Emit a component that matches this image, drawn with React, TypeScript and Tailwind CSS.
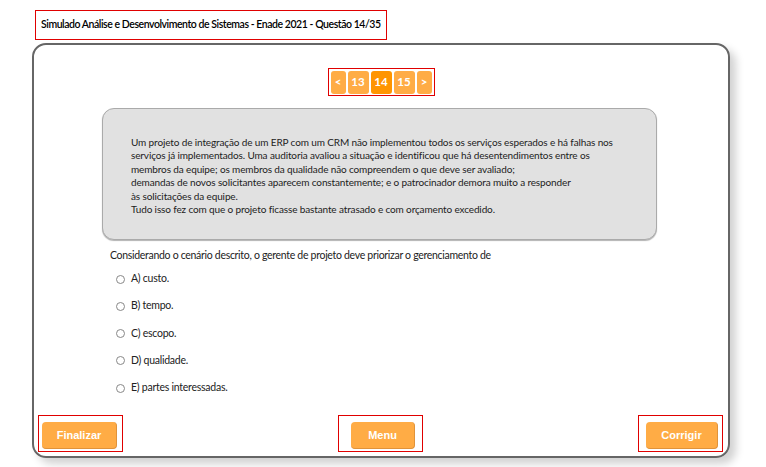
import React from "react";

const options = [
	"A) custo.",
	"B) tempo.",
	"C) escopo.",
	"D) qualidade.",
	"E) partes interessadas.",
];

function PageButton({ label, active }: { label: string; active?: boolean }) {
	return (
		<button
			className={`h-[23px] rounded-[3px] text-white text-[11.5px] font-bold flex items-center justify-center ${
				active ? "bg-[#ff9500]" : "bg-[#ffac45]"
			} ${label.length > 1 ? "w-[21px]" : "w-[15px]"}`}>
			{label}
		</button>
	);
}

function ActionButton({ label, width }: { label: string; width: string }) {
	return (
		<button
			className={`${width} h-[27px] rounded-[4px] bg-[#ffac45] border-b border-r border-[#e0933a] text-white text-[11px] font-bold font-['Liberation_Sans',sans-serif]`}>
			{label}
		</button>
	);
}

export default function App() {
	return (
		<div className="w-[766px] h-[467px] bg-white overflow-hidden text-[#222] font-['Lato',sans-serif]">
			<div className="pt-[10px] pl-[35px]">
				<div className="w-[352px] h-[30px] border border-[#e00000] flex items-center pl-[5px] text-[10.5px] tracking-[-0.45px] font-semibold text-black whitespace-nowrap">
					Simulado Análise e Desenvolvimento de Sistemas - Enade 2021 - Questão 14/35
				</div>
			</div>

			<div className="ml-[32px] mt-[3px] w-[698px] h-[415px] border-2 border-[#666] rounded-[14px] shadow-[6px_6px_8px_rgba(0,0,0,0.18)] flex flex-col">
				{/* pagination */}
				<div className="self-center mt-[23px] w-[107px] h-[28px] border border-[#e00000] flex items-center gap-[2px] px-[2px]">
					<PageButton label="<" />
					<PageButton label="13" />
					<PageButton label="14" active />
					<PageButton label="15" />
					<PageButton label=">" />
				</div>

				{/* enunciado */}
				<div className="mt-[12px] ml-[68px] w-[555px] h-[132px] bg-[#e1e1e1] border border-[#aaa] rounded-[12px] shadow-[0_1px_1px_rgba(0,0,0,0.3)] pl-[28px] pt-[27px] text-[10px] tracking-[-0.13px] leading-[13.4px] text-[#222] whitespace-nowrap">
					<p>
						Um projeto de integração de um ERP com um CRM não implementou todos os serviços esperados e há falhas nos
						<br />
						serviços já implementados. Uma auditoria avaliou a situação e identificou que há desentendimentos entre os
						<br />
						membros da equipe; os membros da qualidade não compreendem o que deve ser avaliado;
					</p>
					<p>demandas de novos solicitantes aparecem constantemente; e o patrocinador demora muito a responder</p>
					<p>às solicitações da equipe.</p>
					<p>Tudo isso fez com que o projeto ficasse bastante atrasado e com orçamento excedido.</p>
				</div>

				<p className="mt-[8px] ml-[76px] text-[10.5px] tracking-[-0.3px] leading-[14px] text-[#222]">
					Considerando o cenário descrito, o gerente de projeto deve priorizar o gerenciamento de
				</p>

				<div className="mt-[10px] ml-[82px] flex flex-col gap-[13.3px]">
					{options.map((o) => (
						<label
							key={o}
							className="flex items-center gap-[6px] h-[14px] text-[10.5px] tracking-[-0.25px] text-[#222]">
							<span className="w-[9px] h-[9px] rounded-full border border-[#888] bg-white" />
							{o}
						</label>
					))}
				</div>

				<div className="mt-auto flex justify-between items-end pl-[4px] pr-[5px] pb-[4px]">
					<div className="w-[85px] h-[37px] border border-[#e00000] pl-[3px] pt-[5px]">
						<ActionButton label="Finalizar" width="w-[75px]" />
					</div>
					<div className="w-[85px] h-[37px] border border-[#e00000] pl-[12px] pt-[5px]">
						<ActionButton label="Menu" width="w-[64px]" />
					</div>
					<div className="w-[85px] h-[37px] border border-[#e00000] pl-[7px] pt-[5px]">
						<ActionButton label="Corrigir" width="w-[72px]" />
					</div>
				</div>
			</div>
		</div>
	);
}
